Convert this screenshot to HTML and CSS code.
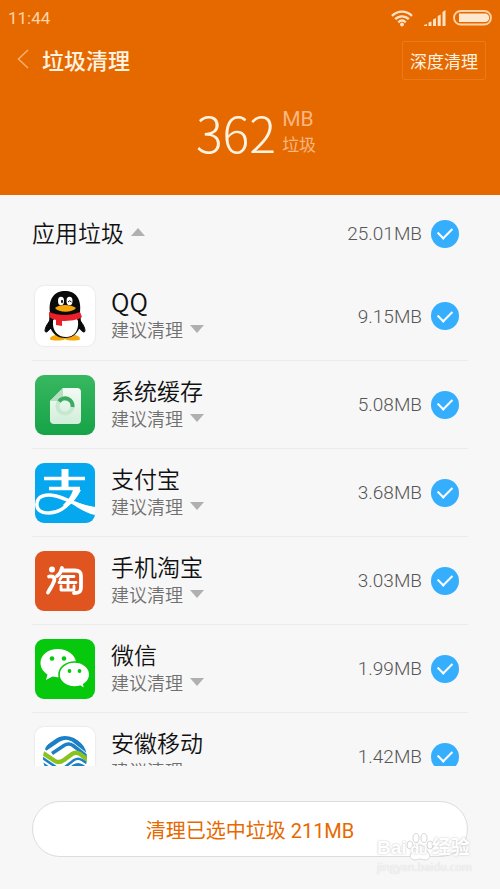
FILE: index.html
```html
<!DOCTYPE html>
<html lang="zh-CN">

<head>
    <meta charset="UTF-8">
    <meta name="viewport" content="width=device-width, initial-scale=1.0">
    <title>垃圾清理</title>
    <link rel="stylesheet" href="styles.css">
</head>

<body>
    <header class="top">
        <div class="status">
            <span class="time">11:44</span>
            <svg class="wifi" width="24" height="18" viewBox="0 0 24 18" fill="none" stroke="#ffe2c4" stroke-width="2.4">
                <path d="M2 6.8C7.600 1.200 16.400 1.200 22 6.800M5.200 10.200c3.800-3.800 9.800-3.800 13.600 0M8.300 13.300c2.200-2 5.200-2 7.400 0"/>
                <circle cx="12" cy="15.500" r="1.900" fill="#ffe2c4" stroke="none"/>
            </svg>
            <svg class="signal" width="22" height="16" viewBox="0 0 22 16" fill="#ffe2c4">
                <path d="M0 16v-1l3-1v2zM4.500 16v-3.500l3-1V16zM9 16V9.500l3-1.500v8zM13.700 16V6l3-1.500V16zM18.500 16V2l3-2v16z"/>
            </svg>
            <svg class="battery" width="40" height="16" viewBox="0 0 40 16">
                <rect x="1" y="1" width="37" height="13.500" rx="6.750" fill="none" stroke="#ffd3a6" stroke-width="1.800"/>
                <path d="M6 3.500h26a4.200 4.200 0 0 1 0 8.500H6z" fill="#ffe8d0"/>
            </svg>
        </div>
        <nav class="bar">
            <button class="back" aria-label="返回">
                <svg width="12" height="20" viewBox="0 0 12 20" fill="none" stroke="#f8ae70" stroke-width="1.500">
                    <path d="M11 1L1.500 10 11 19"/>
                </svg>
            </button>
            <h1>垃圾清理</h1>
            <button class="deep">深度清理</button>
        </nav>
        <div class="total">
            <span class="number">362</span>
            <div class="unit">
                <span class="mb">MB</span>
                <span class="word">垃圾</span>
            </div>
        </div>
    </header>

    <main class="list">
        <div class="group">
            <button class="group-name">应用垃圾<i class="up"></i></button>
            <label class="size">25.01MB<input type="checkbox" checked></label>
        </div>

        <div class="row">
            <svg class="icon white" viewBox="0 0 60 60">
                <path d="M16 33c-3 4-6 8-6 12 1 3 4-1 6-3M44 33c3 4 6 8 6 12-1 3-4-1-6-3" fill="#0a0a0a" stroke="#0a0a0a"/>
                <path d="M15 53c0-3 6-5 11-4h8c6-1 11 1 11 4 0 2-13 2-15 0-2 2-15 2-15 0z" fill="#f5a70c"/>
                <path d="M15 27C13 12 20 5 30 5s17 7 15 22c3 14-3 25-15 25S12 41 15 27z" fill="#0a0a0a"/>
                <path d="M18 35c0-5 24-6 25 0 1 10-4 16-12 16s-14-6-13-16z" fill="#fff"/>
                <path d="M14 26c10 4 21 4 31 0l2 5c-4 3-12 4-20 4v5l-6-1v-5c-4-1-6-2-7-4z" fill="#e8202a"/>
                <ellipse cx="26" cy="15" rx="3" ry="4.200" fill="#fff"/>
                <ellipse cx="34.500" cy="15" rx="3" ry="4.200" fill="#fff"/>
                <ellipse cx="27" cy="15.500" rx="1" ry="1.800" fill="#111"/>
                <path d="M33 16q1.500-2.500 3.500 0" fill="none" stroke="#111"/>
                <path d="M20 22c4-4 16-4 21 0-4 5-17 5-21 0z" fill="#f5a70c"/>
            </svg>
            <div class="info">
                <h2 class="latin">QQ</h2>
                <button class="advice">建议清理<i class="down"></i></button>
            </div>
            <label class="size">9.15MB<input type="checkbox" checked></label>
        </div>

        <div class="row">
            <svg class="icon" viewBox="0 0 60 60">
                <defs>
                    <linearGradient id="leaf" x1="0" y1="0" x2="0" y2="1">
                        <stop offset="0" stop-color="#38b761"/>
                        <stop offset="1" stop-color="#16a347"/>
                    </linearGradient>
                    <linearGradient id="paper" x1="0" y1="0" x2="0" y2="1">
                        <stop offset="0" stop-color="#f2fbf4"/>
                        <stop offset="1" stop-color="#d2eeda"/>
                    </linearGradient>
                </defs>
                <rect width="60" height="60" fill="url(#leaf)"/>
                <path d="M28 13h14a4 4 0 0 1 4 4v28a4 4 0 0 1-4 4H19a4 4 0 0 1-4-4V26z" fill="url(#paper)"/>
                <path d="M28 13v9a4 4 0 0 1-4 4h-9z" fill="#b5dfc0"/>
                <circle cx="30" cy="31" r="7.500" fill="none" stroke="#c6e7d0" stroke-width="4"/>
                <path d="M24 26.500A7.500 7.500 0 0 1 37.500 32" fill="none" stroke="#39ab60" stroke-width="4"/>
            </svg>
            <div class="info">
                <h2>系统缓存</h2>
                <button class="advice">建议清理<i class="down"></i></button>
            </div>
            <label class="size">5.08MB<input type="checkbox" checked></label>
        </div>

        <div class="row">
            <svg class="icon" viewBox="0 0 60 60">
                <rect width="60" height="60" fill="#05a7ee"/>
                <g fill="none" stroke="#fff">
                    <path d="M30 6v19" stroke-width="7"/>
                    <path d="M9 15.500h41" stroke-width="3.500"/>
                    <path d="M14 25.500h31" stroke-width="3.500"/>
                    <path d="M43 26C37 40 26 50 14 50 5 50 1 46 2 40c1-8 10-9 19-7 12 3 24 11 41 14" stroke-width="3.500"/>
                </g>
                <path d="M28 35c10 3 20 7 32 9v8c-11-2-21-10-32-17z" fill="#fff"/>
                <path d="M38 27h8c-4 8-9 13-15 18l-3-3c5-5 8-9 10-15z" fill="#fff"/>
            </svg>
            <div class="info">
                <h2>支付宝</h2>
                <button class="advice">建议清理<i class="down"></i></button>
            </div>
            <label class="size">3.68MB<input type="checkbox" checked></label>
        </div>

        <div class="row">
            <svg class="icon" viewBox="0 0 60 60">
                <rect width="60" height="60" fill="#e0541f"/>
                <g fill="none" stroke="#fff" stroke-linecap="round" stroke-linejoin="round">
                    <circle cx="17" cy="18.500" r="3" fill="#fff" stroke="none"/>
                    <path d="M14 25.500c5-1 7 2 4 7-1 3-3 5-5 9" stroke-width="3.800"/>
                    <path d="M27 17c-1 4-2 6-5 8M26 19.500h14c5 0 6 2 6 6V36c0 5-2 6-7 6" stroke-width="3.800"/>
                    <path d="M27 25.500l-2 3M27 25.500h12M24 31.500h17M33 26v12M26 35v4h13v-4" stroke-width="2.800"/>
                </g>
            </svg>
            <div class="info">
                <h2>手机淘宝</h2>
                <button class="advice">建议清理<i class="down"></i></button>
            </div>
            <label class="size">3.03MB<input type="checkbox" checked></label>
        </div>

        <div class="row">
            <svg class="icon" viewBox="0 0 60 60">
                <rect width="60" height="60" fill="#06c80c"/>
                <path d="M23 10C13 10 5.500 16 5.500 24c0 5 3 9 7 11.500L11 41l6.500-3.500c2 .5 4 .8 6.500.8 9 0 17-6.300 17-14.300S32 10 23 10z" fill="#fff"/>
                <path d="M39.500 23C31 23 24 28.500 24 35.500S31 48 39.500 48c2 0 4-.3 5.500-.8l5 3-1.200-4.700c3.700-2.500 6-6 6-10C54.800 28.500 48 23 39.500 23z" fill="#fff" stroke="#06c80c" stroke-width="1.600"/>
                <g fill="#06c80c">
                    <circle cx="17" cy="19.500" r="2.300"/>
                    <circle cx="29" cy="19.500" r="2.300"/>
                    <circle cx="34.500" cy="32" r="1.900"/>
                    <circle cx="44.500" cy="32" r="1.900"/>
                </g>
            </svg>
            <div class="info">
                <h2>微信</h2>
                <button class="advice">建议清理<i class="down"></i></button>
            </div>
            <label class="size">1.99MB<input type="checkbox" checked></label>
        </div>

        <div class="row">
            <svg class="icon white" viewBox="0 0 60 60">
                <defs>
                    <clipPath id="globe"><ellipse cx="30" cy="31" rx="22" ry="22"/></clipPath>
                </defs>
                <g clip-path="url(#globe)" fill="none">
                    <path d="M10 22L24 12.500c5-3 9-3 14 0l18 14" stroke="#1b80c4" stroke-width="4.500"/>
                    <path d="M17 26.500l12-8c3-2 6-2 9 0l18 14" stroke="#1b80c4" stroke-width="3.500"/>
                    <path d="M8 26l12 8c3 2 6 1 9-1l8-6c3-2 5-2 8 0l12 9" stroke="#8cc220" stroke-width="4.500"/>
                    <path d="M6 30l15 10c3 2 6 2 9 0l9-7c3-2 5-2 8 0l6 4" stroke="#1b80c4" stroke-width="2.500"/>
                    <path d="M6 36l15 10c3 2 6 2 9 0l9-7c3-2 5-2 8 0l6 4" stroke="#1b80c4" stroke-width="3.500"/>
                </g>
            </svg>
            <div class="info">
                <h2>安徽移动</h2>
                <button class="advice">建议清理<i class="down"></i></button>
            </div>
            <label class="size">1.42MB<input type="checkbox" checked></label>
        </div>
    </main>

    <footer class="bottom">
        <button class="clean">清理已选中垃圾 211MB</button>
        <div class="watermark">
            <svg class="paw" width="28" height="28" viewBox="0 0 28 28">
                <ellipse cx="4" cy="12" rx="3" ry="4"/>
                <ellipse cx="10" cy="5" rx="3" ry="4.500"/>
                <ellipse cx="18" cy="5" rx="3" ry="4.500"/>
                <ellipse cx="24" cy="12" rx="3" ry="4"/>
                <path d="M14 12c4 0 5 4 8 7 4 4 1 8-3 8-2 0-3-1-5-1s-3 1-5 1c-4 0-7-4-3-8 3-3 4-7 8-7z"/>
            </svg>
            <span class="brand">Bai<span class="du">du</span>经验</span>
            <span class="site">jingyan.baidu.com</span>
        </div>
    </footer>
</body>

</html>
```

FILE: styles.css
```css
* {
    box-sizing: border-box;
}

body {
    display: flex;
    flex-direction: column;
    height: 100vh;
    margin: 0;
    background: #f7f7f7;
    color: #111;
    font-family: "Noto Sans CJK SC", sans-serif;
    overflow: hidden;
}

button {
    padding: 0;
    border: none;
    background: none;
    color: inherit;
    font-family: inherit;
    cursor: pointer;
}

h1,
h2 {
    margin: 0;
}

/* header */
.top {
    flex: none;
    padding-bottom: 36px;
    background: #e66900;
    color: #fff3e2;
}

.status {
    display: flex;
    align-items: center;
    height: 36px;
    padding: 0 7px 0 8px;
}

.time {
    flex: 1;
    color: #ffd3a6;
    font-family: Roboto, sans-serif;
    font-size: 17px;
}

.signal {
    margin: 0 7px 0 10px;
}

.bar {
    display: flex;
    align-items: center;
    height: 48px;
    padding: 0 14px 0 17px;
}

.back {
    display: flex;
    padding: 0 13px 3px 0;
}

.bar h1 {
    flex: 1;
    padding-bottom: 3px;
    font-size: 22px;
    font-weight: 500;
    line-height: 32px;
}

.deep {
    height: 39px;
    padding: 0 7px;
    border: 1px solid #ea7a1e;
    border-radius: 2px;
    font-size: 17px;
}

.total {
    display: flex;
    justify-content: center;
    align-items: center;
    gap: 6px;
    padding-left: 12px;
    margin-top: 20px;
}

.number {
    font-size: 50px;
    font-weight: 300;
    line-height: 55px;
}

.unit {
    display: flex;
    flex-direction: column;
    color: #f8b780;
}

.mb {
    font-family: Roboto, sans-serif;
    font-size: 21px;
    line-height: 24px;
}

.word {
    font-size: 17px;
    line-height: 25px;
}

/* list */
.list {
    flex: 1;
    min-height: 0;
    padding: 0 32px;
    overflow: hidden;
}

.group {
    display: flex;
    justify-content: space-between;
    align-items: center;
    height: 77px;
    padding-right: 9px;
}

.group-name {
    display: flex;
    align-items: center;
    gap: 7px;
    padding-bottom: 3px;
    font-size: 23px;
    font-weight: 350;
}

.row {
    display: flex;
    align-items: center;
    height: 88px;
    padding: 0 9px 0 3px;
}

.row + .row {
    border-top: 1px solid #ececec;
}

.icon {
    flex: none;
    width: 60px;
    height: 60px;
    border-radius: 9px;
}

.white {
    background: #fff;
    box-shadow: 0 0 1px 1px #ececec;
}

.info {
    flex: 1;
    padding-bottom: 2px;
    margin-left: 16px;
}

.info h2 {
    font-size: 23px;
    font-weight: 350;
    line-height: 28px;
}

.info .latin {
    font-size: 25px;
}

.advice {
    display: flex;
    align-items: center;
    gap: 7px;
    color: #707070;
    font-size: 18px;
    font-weight: 350;
    line-height: 28px;
}

.up,
.down {
    border: 7px solid transparent;
}

.up {
    border-top: none;
    border-bottom: 8px solid #b0b0b0;
}

.down {
    border-top: 8px solid #b0b0b0;
    border-bottom: none;
}

.size {
    display: flex;
    align-items: center;
    gap: 9px;
    color: #555;
    font-family: Roboto, sans-serif;
    font-size: 19px;
    font-weight: 300;
}

.size input {
    display: grid;
    place-items: center;
    width: 28px;
    height: 28px;
    margin: 0;
    border: 1px solid #ccc;
    border-radius: 50%;
    appearance: none;
}

.size input:checked {
    border: none;
    background: #35aefd;
}

.size input:checked::after {
    content: "";
    width: 12px;
    height: 7px;
    margin-bottom: 4px;
    border: solid #fff;
    border-width: 0 0 2px 2px;
    transform: rotate(-45deg);
}

/* footer */
.bottom {
    position: relative;
    flex: none;
    padding: 35px 32px 32px;
}

.clean {
    width: 100%;
    height: 56px;
    border: 1px solid #dcdcdc;
    border-radius: 28px;
    background: #fff;
    color: #e66900;
    font-family: Roboto, "Noto Sans CJK SC", sans-serif;
    font-size: 20px;
}

.watermark {
    position: absolute;
    right: 28px;
    bottom: 16px;
    display: flex;
    flex-direction: column;
    color: #fff;
    text-shadow: 0 0 2px #bbb;
    pointer-events: none;
}

.brand {
    z-index: 1;
    font-family: "Liberation Sans", "Noto Sans CJK SC", sans-serif;
    font-size: 19px;
    font-weight: 700;
    line-height: 20px;
}

.du {
    padding: 0 4px;
    font-size: 14px;
}

.site {
    color: #f4f4f4;
    font-size: 11px;
    line-height: 14px;
    text-shadow: 0 0 1px #ccc;
}

.paw {
    position: absolute;
    left: 29px;
    bottom: 12px;
    fill: #fff;
    stroke: #d8d8d8;
}
```
